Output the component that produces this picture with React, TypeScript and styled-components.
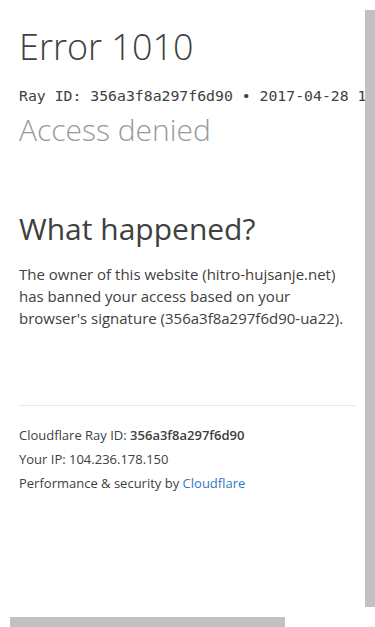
import React from "react";
import styled, { createGlobalStyle } from "styled-components";

const Global = createGlobalStyle`
  html, body {
    margin: 0;
    padding: 0;
    background: #ffffff;
    overflow: hidden;
    width: 375px;
    height: 627px;
  }
  body {
    font-family: "Open Sans", "Noto Sans", sans-serif;
    color: #404040;
  }
  * { box-sizing: border-box; }
`;

const Wrapper = styled.div`
  padding: 0 19px;
  width: 375px;
`;

const Header = styled.header`
  padding-top: 24px;
`;

const Title = styled.h1`
  margin: 0;
  font-size: 36px;
  line-height: 46px;
  font-weight: 300;
  color: #404040;
`;

const RayLine = styled.div`
  margin: 16px 0 6px;
  font-family: "DejaVu Sans Mono", monospace;
  font-size: 14.8px;
  line-height: 20px;
  color: #404040;
  white-space: nowrap;
`;

const Subheadline = styled.h2`
  margin: 0;
  font-size: 30px;
  line-height: 36px;
  font-weight: 300;
  color: #999999;
`;

const Section = styled.section`
  margin-top: 63px;
`;

const SectionTitle = styled.h2`
  margin: 0;
  font-size: 30px;
  line-height: 36px;
  font-weight: 400;
  color: #404040;
`;

const Paragraph = styled.p`
  margin: 16px 0 0;
  font-size: 15px;
  line-height: 22px;
  color: #404040;
`;

const Footer = styled.footer`
  margin-top: 76px;
  border-top: 1px solid #e8e8e8;
  padding-top: 17px;
  width: 337px;
`;

const FooterLine = styled.p`
  margin: 0;
  font-size: 13px;
  line-height: 24px;
  color: #404040;
`;

const Strong = styled.strong`
  font-weight: 600;
`;

const Link = styled.a`
  color: #2f7bbf;
  text-decoration: none;
`;

const VScroll = styled.div`
  position: fixed;
  top: 10px;
  right: 0;
  width: 10px;
  height: 597px;
  background: #c1c1c1;
`;

const HScroll = styled.div`
  position: fixed;
  left: 10px;
  bottom: 0;
  height: 10px;
  width: 275px;
  background: #c1c1c1;
`;

export default function App() {
  return (
    <>
      <Global />
      <Wrapper>
        <Header>
          <Title>Error 1010</Title>
          <RayLine>Ray ID: 356a3f8a297f6d90 • 2017-04-28 13:39:56 UTC</RayLine>
          <Subheadline>Access denied</Subheadline>
        </Header>
        <Section>
          <SectionTitle>What happened?</SectionTitle>
          <Paragraph>
            The owner of this website (hitro-hujsanje.net) has banned your access based on your
            browser's signature (356a3f8a297f6d90-ua22).
          </Paragraph>
        </Section>
        <Footer>
          <FooterLine>
            Cloudflare Ray ID: <Strong>356a3f8a297f6d90</Strong>
          </FooterLine>
          <FooterLine>Your IP: 104.236.178.150</FooterLine>
          <FooterLine>
            Performance &amp; security by <Link href="#">Cloudflare</Link>
          </FooterLine>
        </Footer>
      </Wrapper>
      <VScroll />
      <HScroll />
    </>
  );
}
